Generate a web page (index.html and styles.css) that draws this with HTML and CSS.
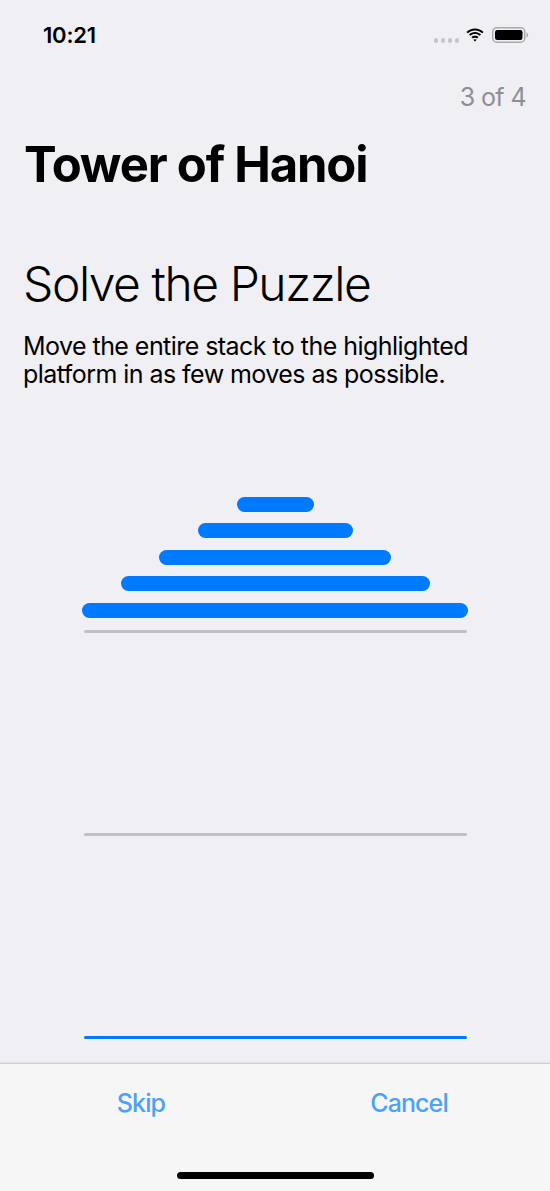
FILE: index.html
```html
<!DOCTYPE html>
<html lang="en">
<head>
<meta charset="utf-8">
<title>Tower of Hanoi</title>
<link rel="stylesheet" href="styles.css">
</head>
<body>
<div class="screen">
  <div class="status-bar">
    <span class="time">10:21</span>
    <div class="status-icons">
      <span class="signal"><i></i><i></i><i></i><i></i></span>
      <svg class="wifi" width="18" height="14" viewBox="0 0 17 13">
        <path d="M8.5 2.2c2.6 0 5 1 6.8 2.7l1.3-1.3C14.5 1.5 11.6.3 8.5.3S2.5 1.5.4 3.6l1.3 1.3C3.5 3.2 5.9 2.2 8.5 2.2z" fill="#000"/>
        <path d="M8.5 5.6c1.7 0 3.2.6 4.4 1.7l1.3-1.3C12.7 4.6 10.7 3.7 8.5 3.7S4.3 4.6 2.8 6l1.3 1.3c1.2-1.1 2.7-1.7 4.4-1.7z" fill="#000"/>
        <path d="M8.5 9c.8 0 1.5.3 2 .8l1.4-1.4C11 7.6 9.8 7.1 8.5 7.1S6 7.6 5.1 8.4l1.4 1.4c.5-.5 1.2-.8 2-.8zM8.5 12.7l1.6-1.6c-.4-.4-1-.7-1.6-.7s-1.2.3-1.6.7z" fill="#000"/>
      </svg>
      <svg class="battery" width="37" height="16" viewBox="0 0 37 16">
        <rect x="0.75" y="0.75" width="32" height="14.5" rx="4" fill="none" stroke="#a8a8ad" stroke-width="1.5"/>
        <rect x="3" y="3" width="27.5" height="10" rx="2.2" fill="#000"/>
        <path d="M34.5 5.5v5c1-.3 1.6-1.3 1.6-2.5s-.6-2.2-1.6-2.5z" fill="#a8a8ad"/>
      </svg>
    </div>
  </div>

  <div class="step-count">3 of 4</div>

  <h1 class="title">Tower of Hanoi</h1>

  <h2 class="subtitle">Solve the Puzzle</h2>
  <p class="description">Move the entire stack to the highlighted platform in as few moves as possible.</p>

  <div class="puzzle">
    <div class="platform">
      <div class="disc d1"></div>
      <div class="disc d2"></div>
      <div class="disc d3"></div>
      <div class="disc d4"></div>
      <div class="disc d5"></div>
      <div class="base"></div>
    </div>
    <div class="platform">
      <div class="base"></div>
    </div>
    <div class="platform">
      <div class="base target"></div>
    </div>
  </div>

  <div class="toolbar">
    <div class="toolbar-buttons">
      <span class="tool-btn">Skip</span>
      <span class="tool-btn">Cancel</span>
    </div>
    <div class="home-indicator"></div>
  </div>
</div>
</body>
</html>
```

FILE: styles.css
```css
* {
  box-sizing: border-box;
}

html, body {
  margin: 0;
  padding: 0;
}

body {
  background: #efeff4;
  font-family: Inter, "Noto Sans", "Liberation Sans", sans-serif;
  color: #000;
}

.screen {
  width: 550px;
  height: 1191px;
  display: flex;
  flex-direction: column;
  overflow: hidden;
}

.status-bar {
  height: 70px;
  display: flex;
  align-items: center;
  justify-content: space-between;
  padding: 0 21px 0 43px;
}

.time {
  font-size: 22px;
  font-weight: 600;
  letter-spacing: -0.2px;
}

.status-icons {
  display: flex;
  align-items: center;
  gap: 7px;
}

.signal {
  display: flex;
  gap: 2.5px;
  margin-top: 11px;
}

.signal i {
  width: 4.5px;
  height: 4.5px;
  border-radius: 50%;
  background: #c4c4c9;
}

.wifi {
  display: block;
  margin-right: 1px;
}

.battery {
  display: block;
}

.step-count {
  margin-top: 12px;
  padding: 0 24px;
  text-align: right;
  font-size: 25px;
  line-height: 30px;
  letter-spacing: -0.6px;
  color: #8e8e93;
}

.title {
  margin: 23px 0 0;
  padding: 0 24px;
  font-size: 49px;
  line-height: 60px;
  font-weight: 700;
  letter-spacing: -1.2px;
}

.subtitle {
  margin: 59px 0 0;
  padding: 0 23px;
  font-size: 48px;
  line-height: 60px;
  font-weight: 300;
  letter-spacing: -1.45px;
}

.description {
  margin: 18px 0 0;
  padding: 0 23px;
  font-size: 25px;
  line-height: 28px;
  font-weight: 400;
  letter-spacing: -0.55px;
}

.puzzle {
  width: 383px;
  margin: 41px auto 0;
  display: flex;
  flex-direction: column;
}

.platform {
  height: 203px;
  display: flex;
  flex-direction: column;
  justify-content: flex-end;
  align-items: center;
}

.platform:first-child {
  height: 203.5px;
}

.disc {
  height: 15px;
  border-radius: 7.5px;
  background: #007aff;
  margin-bottom: 11.5px;
  flex-shrink: 0;
}

.disc.d5 {
  margin-bottom: 12px;
}

.d1 { width: 77px; }
.d2 { width: 155px; }
.d3 { width: 232px; }
.d4 { width: 309px; }
.d5 { width: 386px; }

.base {
  width: 383px;
  height: 3px;
  border-radius: 1.5px;
  background: #c1c0c7;
  flex-shrink: 0;
}

.base.target {
  background: #007aff;
  height: 2.5px;
}

.toolbar {
  margin-top: auto;
  height: 128px;
  background: #f6f6f6;
  border-top: 1px solid #cfcfd3;
  box-shadow: 0 -1px 1px rgba(0, 0, 0, 0.05);
  display: flex;
  flex-direction: column;
  align-items: center;
  padding-top: 24px;
}

.toolbar-buttons {
  width: 100%;
  display: grid;
  grid-template-columns: 1fr 1fr;
  padding: 0 7px;
}

.tool-btn {
  justify-self: center;
  font-size: 25px;
  line-height: 30px;
  font-weight: 500;
  letter-spacing: -0.9px;
  color: #4da1f9;
}

.home-indicator {
  margin-top: 54px;
  width: 197px;
  height: 7px;
  border-radius: 3.5px;
  background: #000;
}
```
